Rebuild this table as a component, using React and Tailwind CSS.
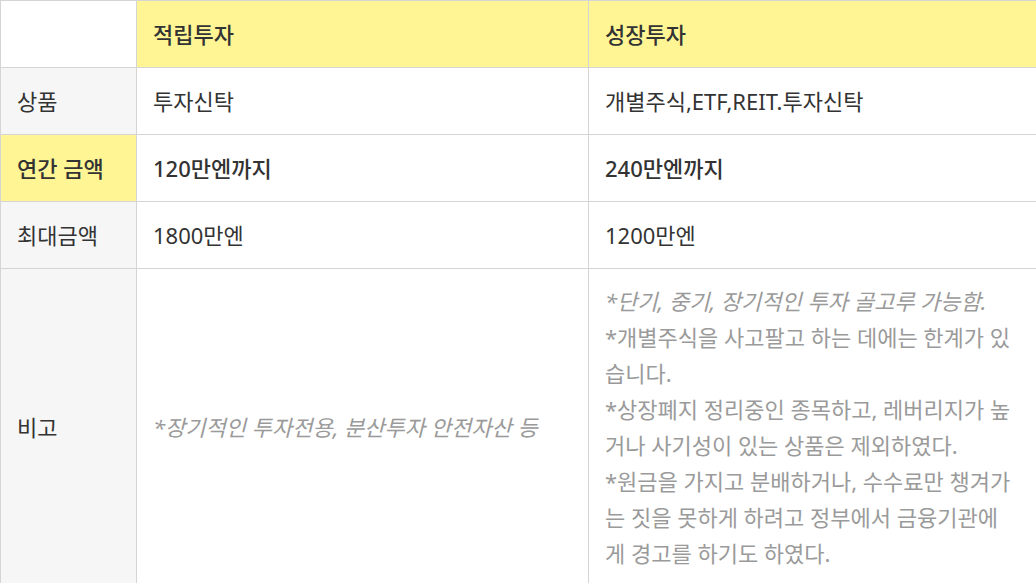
import React from "react";

const font = { fontFamily: '"Noto Sans", "Noto Sans CJK KR", sans-serif' };

function Cell({ children, className = "", color = "text-[#333]" }) {
  return (
    <div className={`border-l border-t border-[#d5d5d5] px-4 flex items-center text-[22px] leading-[36px] ${color} ${className}`}>
      {children}
    </div>
  );
}

export default function App() {
  const lines = [
    { t: "*단기, 중기, 장기적인 투자 골고루 가능함.", i: true },
    { t: "*개별주식을 사고팔고 하는 데에는 한계가 있" },
    { t: "습니다." },
    { t: "*상장폐지 정리중인 종목하고, 레버리지가 높" },
    { t: "거나 사기성이 있는 상품은 제외하였다." },
    { t: "*원금을 가지고 분배하거나, 수수료만 챙겨가" },
    { t: "는 짓을 못하게 하려고 정부에서 금융기관에" },
    { t: "게 경고를 하기도 하였다." },
  ];
  return (
    <div className="w-[1036px] h-[583px] overflow-hidden bg-white" style={font}>
      <div className="grid grid-cols-[136px_452px_1fr] auto-rows-[67px]">
        <Cell className="bg-white" />
        <Cell className="bg-[#fff594] font-medium">적립투자</Cell>
        <Cell className="bg-[#fff594] font-medium">성장투자</Cell>

        <Cell className="bg-[#f6f6f6]">상품</Cell>
        <Cell>투자신탁</Cell>
        <Cell>개별주식,ETF,REIT.투자신탁</Cell>

        <Cell className="bg-[#fff594] font-medium">연간 금액</Cell>
        <Cell className="font-medium">120만엔까지</Cell>
        <Cell className="font-medium">240만엔까지</Cell>

        <Cell className="bg-[#f6f6f6]">최대금액</Cell>
        <Cell>1800만엔</Cell>
        <Cell>1200만엔</Cell>

        <Cell className="bg-[#f6f6f6] h-[317px]">비고</Cell>
        <Cell className="h-[317px] italic" color="text-[#9a9a9a]">*장기적인 투자전용, 분산투자 안전자산 등</Cell>
        <div className="h-[317px] border-l border-t border-[#d5d5d5] px-4 pt-[14px] text-[22px] leading-[36px] text-[#9a9a9a]">
          {lines.map((l, k) => (
            <div key={k} className={`whitespace-nowrap ${l.i ? "italic" : ""}`}>{l.t}</div>
          ))}
        </div>
      </div>
    </div>
  );
}
